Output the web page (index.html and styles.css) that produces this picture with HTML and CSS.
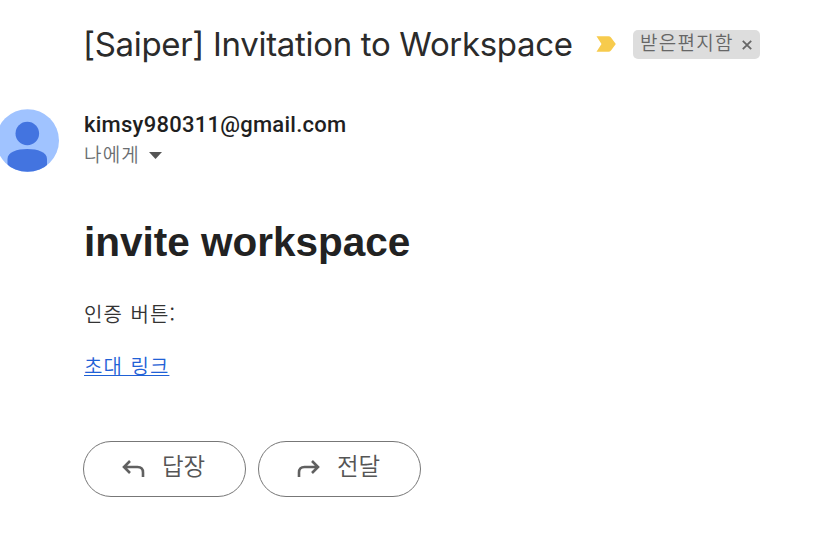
FILE: index.html
```
<!DOCTYPE html>
<html lang="ko">
<head>
<meta charset="utf-8">
<title>[Saiper] Invitation to Workspace</title>
<link rel="stylesheet" href="styles.css">
</head>
<body>
<main class="mail">
  <header class="subject">
    <h1 class="subject-title">[Saiper] Invitation to Workspace</h1>
    <svg class="important" width="20" height="16" viewBox="0 0 20 16"><path d="M.5.3H12.5Q14 .3 15 1.6L19.8 8L15 14.4Q14 15.7 12.5 15.7H.5L5.500 8Z" fill="#f7cb4d"/></svg>
    <span class="label"><span class="label-name">받은편지함</span><svg width="10" height="10" viewBox="0 0 10 10"><path d="M.8.8L9.200 9.200M9.200.8L.8 9.200" stroke="#666" stroke-width="1.800"/></svg></span>
  </header>
  <section class="sender">
    <svg class="avatar" width="59" height="63" viewBox="0 0 59 63"><defs><clipPath id="disc"><ellipse cx="27.500" cy="31.500" rx="31.500" ry="31.300"/></clipPath></defs><g clip-path="url(#disc)"><rect width="59" height="63" fill="#a0c3ff"/><circle cx="27.300" cy="24.500" r="11.800" fill="#4374e0"/><path d="M7.500 63V50C7.500 43 17 40 27.300 40S47 43 47 50V63Z" fill="#4374e0"/></g></svg>
    <div class="who">
      <div class="address">kimsy980311@gmail.com</div>
      <div class="to"><span>나에게</span><svg width="13" height="7" viewBox="0 0 13 7"><path d="M0 0H13L6.500 7Z" fill="#555"/></svg></div>
    </div>
  </section>
  <article class="content">
    <h2 class="heading">invite workspace</h2>
    <p class="line">인증 버튼:</p>
    <p class="line"><a class="link" href="#">초대 링크</a></p>
  </article>
  <footer class="actions">
    <button class="action"><svg width="23" height="18" viewBox="0 0 23 18"><path d="M8 1L2 7L8 13M2 7H15.500Q21 7 21 12.500V17" fill="none" stroke="#606060" stroke-width="2.600"/></svg><span>답장</span></button>
    <button class="action"><svg width="23" height="18" viewBox="0 0 23 18"><path d="M15 1L21 7L15 13M21 7H7.500Q2 7 2 12.500V17" fill="none" stroke="#606060" stroke-width="2.600"/></svg><span>전달</span></button>
  </footer>
</main>
</body>
</html>
```
FILE: styles.css
```
* { box-sizing: border-box; }
body {
  margin: 0;
  background: #fff;
  color: #1f1f1f;
  font-family: "Liberation Sans", "Noto Sans CJK KR", sans-serif;
}
h1, h2, p { margin: 0; }
svg { display: block; flex: none; }
.mail { padding-top: 22px; }
.subject {
  display: flex;
  align-items: center;
  height: 44px;
  padding-left: 83px;
}
.subject-title {
  width: 513px;
  color: #2b2b2b;
  font: 400 33px/44px Inter, sans-serif;
  letter-spacing: -0.320px;
  white-space: nowrap;
}
.label {
  display: flex;
  align-items: center;
  width: 127px;
  height: 29px;
  margin-left: 17px;
  padding-left: 7px;
  border-radius: 5px;
  background: #ddd;
  color: #666;
}
.label svg { margin-top: 1px; }
.label-name {
  width: 102px;
  margin-top: -5px;
  font: 350 19px/27px "Noto Sans CJK KR", sans-serif;
  letter-spacing: 1.300px;
  white-space: nowrap;
}
.sender {
  display: flex;
  gap: 25px;
  margin-top: 43px;
  height: 63px;
}
.address {
  margin-top: 1px;
  font: 500 22px/30px Roboto, sans-serif;
  letter-spacing: 0.260px;
}
.to {
  display: flex;
  align-items: center;
  gap: 9px;
  font: 350 19px/30px "Noto Sans CJK KR", sans-serif;
  letter-spacing: 1.200px;
  color: #6a6d70;
}
.to span { margin-top: -1px; }
.to svg { margin-top: 2px; }
.content { padding: 45px 0 0 84px; }
.heading {
  color: #222;
  font-size: 40.5px;
  line-height: 50px;
}
.line {
  font: 350 20px/30px "Noto Sans CJK KR", sans-serif;
  letter-spacing: 1px;
  word-spacing: 1.200px;
  color: #333;
}
.heading + .line { margin: 32px 0 22px; }
.link {
  color: #1f61d6;
  text-decoration-thickness: 1px;
}
.actions {
  display: flex;
  gap: 12px;
  margin-top: 60px;
  padding-left: 83px;
}
.action {
  display: flex;
  align-items: center;
  gap: 17px;
  width: 163px;
  height: 56px;
  padding: 0 0 0 38px;
  border: 1px solid #777;
  border-radius: 28px;
  background: #fff;
  color: #555;
  font: 350 23.500px/32px "Noto Sans CJK KR", sans-serif;
}
.action span { margin-top: -8px; }
.action svg { margin-top: 0; }
```
